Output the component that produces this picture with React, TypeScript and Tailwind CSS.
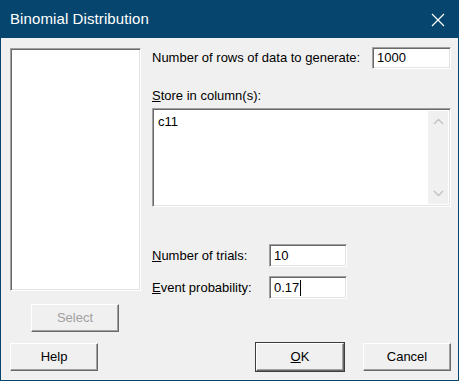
import React from "react";

// sunken edit box / list border, classic Windows look
const sunken =
  "bg-white border border-t-[#a0a0a0] border-l-[#a0a0a0] border-r-white border-b-white shadow-[inset_1px_1px_0_#696969,inset_-1px_-1px_0_#e3e3e3]";

const raised =
  "bg-[#f0f0f0] border border-t-white border-l-white border-r-[#696969] border-b-[#696969] shadow-[inset_-1px_-1px_0_#a0a0a0]";

function Btn({ children, className = "", disabled = false }: { children: React.ReactNode; className?: string; disabled?: boolean }) {
  return (
    <div
      className={`${raised} h-[28px] w-[88px] flex items-center justify-center text-[13px] ${disabled ? "text-[#a0a0a0]" : "text-black"} ${className}`}
    >
      {children}
    </div>
  );
}

function Field({ value, caret = false }: { value: string; caret?: boolean }) {
  return (
    <div className={`${sunken} h-[23px] w-[78px] flex items-center pl-[4px] text-[13px]`}>
      <span>{value}</span>
      {caret && <span className="w-px h-[16px] bg-black ml-px" />}
    </div>
  );
}

export default function App() {
  return (
    <div
      className="w-[459px] h-[381px] flex flex-col bg-[#f0f0f0] border border-t-0 border-[#06466e] text-black"
      style={{ fontFamily: '"Liberation Sans", Arial, sans-serif' }}
    >
      {/* title bar */}
      <div className="h-[38px] bg-[#06466e] flex items-center justify-between pl-[10px] pr-[14px] -mx-px">
        <span className="text-white text-[15px] tracking-[0.1px]">Binomial Distribution</span>
        <svg width="14" height="14" viewBox="0 0 14 14" className="mt-px">
          <path d="M1 1L13 13M13 1L1 13" stroke="#ffffff" strokeWidth="1.2" />
        </svg>
      </div>

      <div className="flex flex-col flex-1 pl-[9px] pr-[7px]">
        <div className="flex gap-[11px]">
          {/* variable list */}
          <div className="w-[131px] pt-[10px] flex flex-col items-center">
            <div className={`${sunken} w-[131px] h-[243px]`} />
            <Btn disabled className="mt-[13px] ml-[-1px]">Select</Btn>
          </div>

          {/* options */}
          <div className="flex-1 flex flex-col pt-[9px] text-[13px]">
            <div className="flex items-center justify-between">
              <span>
                Number of rows of data to <span className="underline">g</span>enerate:
              </span>
              <div className={`${sunken} h-[22px] w-[79px] flex items-center pl-[4px]`}>1000</div>
            </div>

            <div className="mt-[18px] leading-[18px]">
              <span className="underline">S</span>tore in column(s):
            </div>
            <div className={`${sunken} mt-[3px] h-[99px] flex`}>
              <div className="flex-1 pl-[5px] pt-[3px]">c11</div>
              <div className="w-[20px] my-[2px] mr-[2px] bg-[#f0f0f0] flex flex-col justify-between items-center py-[7px]">
                <svg width="11" height="7" viewBox="0 0 11 7">
                  <path d="M1 6L5.5 1.5L10 6" stroke="#c2c2c2" strokeWidth="1.4" fill="none" />
                </svg>
                <svg width="11" height="7" viewBox="0 0 11 7">
                  <path d="M1 1L5.5 5.5L10 1" stroke="#c2c2c2" strokeWidth="1.4" fill="none" />
                </svg>
              </div>
            </div>

            <div className="mt-[37px] flex items-center">
              <span className="w-[117px]">
                <span className="underline">N</span>umber of trials:
              </span>
              <Field value="10" />
            </div>
            <div className="mt-[9px] flex items-center">
              <span className="w-[117px]">
                <span className="underline">E</span>vent probability:
              </span>
              <Field value="0.17" caret />
            </div>
          </div>
        </div>

        {/* bottom buttons */}
        <div className="mt-auto mb-[8px] flex items-center">
          <Btn>Help</Btn>
          <div className="flex-1" />
          <div className="border border-[#3c3c3c]">
            <Btn className="w-[85px] h-[26px]">
              <span className="underline">O</span>K
            </Btn>
          </div>
          <Btn className="ml-[18px]">Cancel</Btn>
        </div>
      </div>
    </div>
  );
}
